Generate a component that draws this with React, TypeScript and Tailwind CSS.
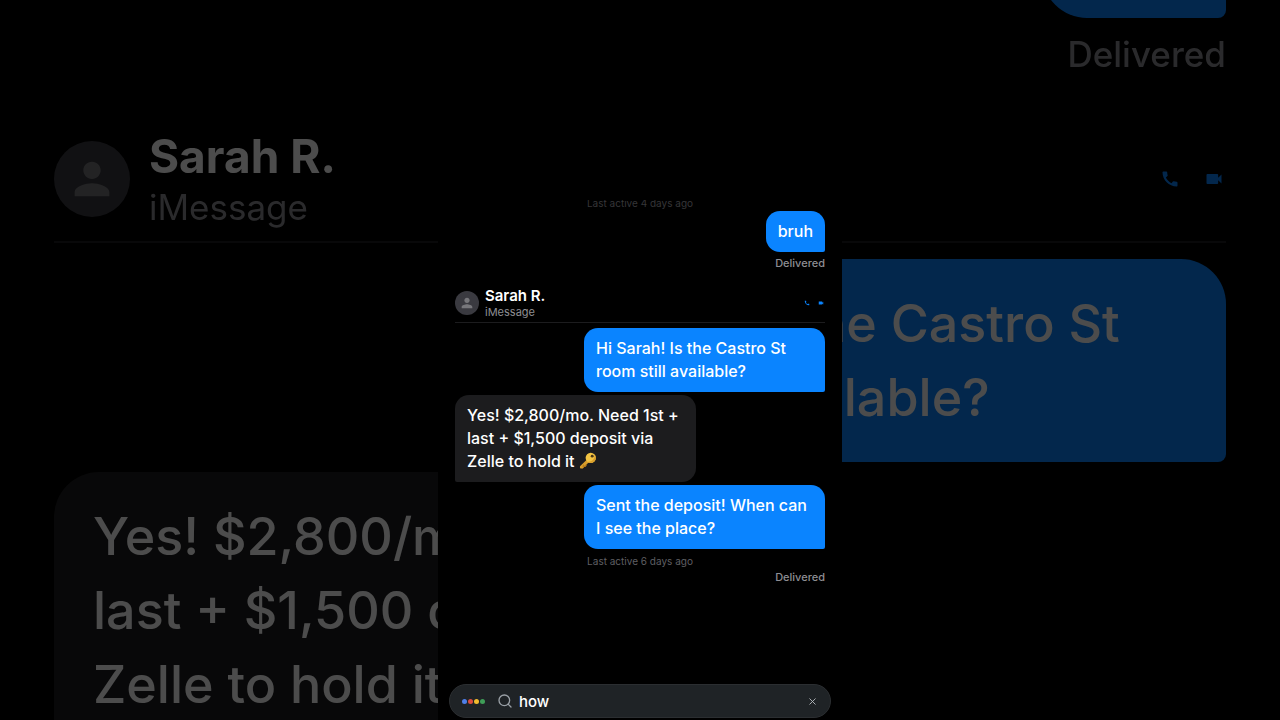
import { useState } from "react";
import { Search, X } from "lucide-react";
import { MdCall, MdPerson, MdVideocam } from "react-icons/md";

const regular = {
  thread: "px-[17px]",
  bubble: "max-w-[241px] px-3 py-[9px] text-[16px] leading-[23px]",
  sent: "rounded-[14px] rounded-br-[2px]",
  received: "rounded-[14px] rounded-bl-[2px]",
  messages: "mt-[5px] gap-[3px]",
  status: "mt-[3px] text-[11px] leading-4",
  header: "mt-4 gap-[6px] pb-[3px] border-b",
  avatar: "h-6 w-6",
  person: "h-4 w-4",
  name: "text-[15px] leading-[18px] font-semibold",
  service: "text-[11px] leading-[14px]",
  actions: "gap-2 pr-[1px]",
  action: "h-[6px] w-[6px]",
};

const large: typeof regular = {
  thread: "px-[54px]",
  bubble: "max-w-[763px] pt-7 pr-[30px] pb-[27px] pl-[39px] text-[52px] leading-[74px]",
  sent: "rounded-[45px] rounded-br-[8px]",
  received: "rounded-[45px] rounded-bl-[8px]",
  messages: "mt-4 gap-[10px]",
  status: "mt-[11px] text-[35px] leading-[50px]",
  header: "mt-[49px] gap-[19px] pb-3 border-b-2",
  avatar: "h-[76px] w-[76px]",
  person: "h-[52px] w-[52px]",
  name: "text-[46px] leading-[57px] font-bold",
  service: "text-[35px] leading-[44px]",
  actions: "gap-6 pr-[2px]",
  action: "h-5 w-5",
};

type Styles = typeof regular;

const KeyIcon = () => (
  <svg viewBox="0 0 36 36" role="img" aria-label="key" className="inline-block h-[1.1em] w-[1.1em] align-[-0.15em]">
    <path d="M17.5 14.5 22 19 9.5 31.5 8 34H3.5L2 32.5V29z" fill="#d99e2b" />
    <path d="m8.5 25 3 3 2.5-2.5 2 2-3 3-2-.5-2 2.5-2-2z" fill="#b97d1c" />
    <circle cx="24" cy="12" r="10.5" fill="#f3c443" />
    <path d="M31.5 4.6A10.5 10.5 0 0 1 16.6 19.4 12 12 0 0 0 31.5 4.6z" fill="#d99e2b" />
    <circle cx="27" cy="8.5" r="3" fill="#4a3718" />
  </svg>
);

const Bubble = ({ styles, sent, children }: { styles: Styles; sent?: boolean; children: React.ReactNode }) => (
  <div
    className={`font-medium text-white ${styles.bubble} ${
      sent ? `self-end bg-[#0a84ff] ${styles.sent}` : `self-start bg-[#1c1c1e] ${styles.received}`
    }`}
  >
    {children}
  </div>
);

const Conversation = ({ styles }: { styles: Styles }) => (
  <div className={`flex flex-col ${styles.thread}`}>
    <Bubble styles={styles} sent>
      bruh
    </Bubble>
    <p className={`text-right font-medium text-[#8e8e93] ${styles.status}`}>Delivered</p>

    <header className={`flex items-center border-[#1c1c1e] ${styles.header}`}>
      <div className={`flex items-center justify-center rounded-full bg-[#3a3a40] text-[#77777b] ${styles.avatar}`}>
        <MdPerson className={styles.person} />
      </div>
      <div>
        <h1 className={`text-white ${styles.name}`}>Sarah R.</h1>
        <p className={`text-[#8e8e93] ${styles.service}`}>iMessage</p>
      </div>
      <div className={`ml-auto flex items-center text-[#0a84ff] ${styles.actions}`}>
        <button type="button" aria-label="Call">
          <MdCall className={styles.action} />
        </button>
        <button type="button" aria-label="Video call">
          <MdVideocam className={styles.action} />
        </button>
      </div>
    </header>

    <div className={`flex flex-col ${styles.messages}`}>
      <Bubble styles={styles} sent>
        Hi Sarah! Is the Castro St room still available?
      </Bubble>
      <Bubble styles={styles}>
        Yes! $2,800/mo. Need 1st + last + $1,500 deposit via Zelle to hold it <KeyIcon />
      </Bubble>
      <Bubble styles={styles} sent>
        Sent the deposit! When can I see the place?
      </Bubble>
    </div>
  </div>
);

const SearchBar = () => {
  const [query, setQuery] = useState("how");

  return (
    <form
      role="search"
      onSubmit={(e) => e.preventDefault()}
      className="mx-[11px] mt-auto mb-[2px] flex h-[34px] items-center rounded-full border border-[#2b2e31] bg-[#1f2326] px-3"
    >
      <div className="flex gap-[1px]">
        <span className="h-[5px] w-[5px] rounded-full bg-[#4f7fe8]" />
        <span className="h-[5px] w-[5px] rounded-full bg-[#dc4a3d]" />
        <span className="h-[5px] w-[5px] rounded-full bg-[#f2bb2e]" />
        <span className="h-[5px] w-[5px] rounded-full bg-[#3f9d57]" />
      </div>
      <Search className="ml-3 h-4 w-4 text-[#9aa0a6]" />
      <input
        type="text"
        aria-label="Search"
        value={query}
        onChange={(e) => setQuery(e.target.value)}
        className="ml-[6px] min-w-0 flex-1 bg-transparent text-[15px] leading-[23px] font-medium text-white outline-none"
      />
      <button type="button" aria-label="Clear" onClick={() => setQuery("")} className="text-[#b4b8bc]">
        <X className="h-[11px] w-[11px]" />
      </button>
    </form>
  );
};

export default function App() {
  return (
    <div className="relative h-screen overflow-hidden bg-black font-['Inter',sans-serif]">
      {/* dimmed enlargement of the thread behind the phone column */}
      <div aria-hidden="true" inert className="absolute inset-0 overflow-hidden opacity-30">
        <div className="-mt-[111px]">
          <Conversation styles={large} />
        </div>
      </div>

      <main className="relative mx-auto flex h-full w-full max-w-[404px] flex-col bg-black pt-[200px]">
        <div className="flex h-[11px] flex-col justify-end overflow-hidden pb-[1px]">
          <p className="text-center text-[10px] leading-[14px] text-[#363638]">Last active 4 days ago</p>
        </div>
        <Conversation styles={regular} />
        <p className="mt-[5px] text-center text-[10px] leading-[14px] text-[#5f5f63]">Last active 6 days ago</p>
        <p className="mt-[1px] px-[17px] text-right text-[11px] leading-4 font-medium text-[#8e8e93]">Delivered</p>
        <SearchBar />
      </main>
    </div>
  );
}
